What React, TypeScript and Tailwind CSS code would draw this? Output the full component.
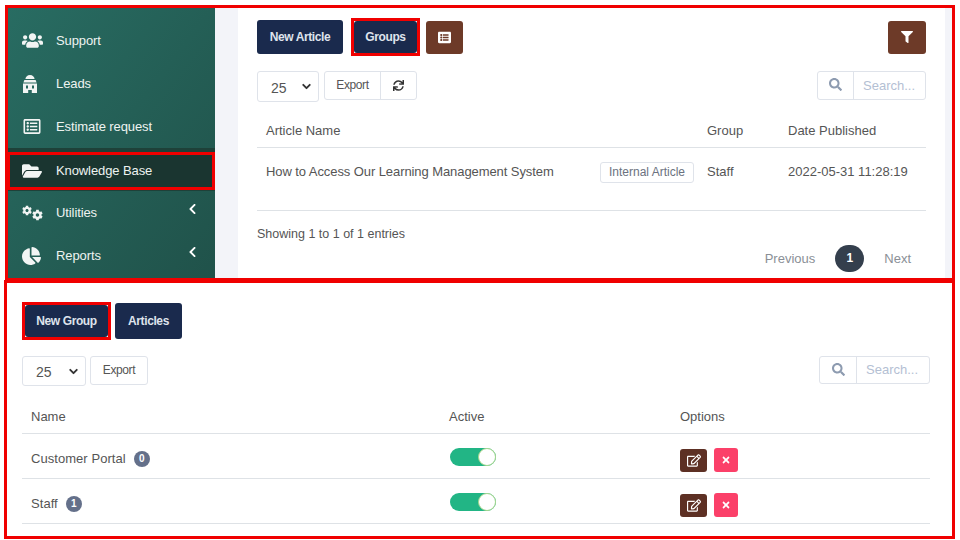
import type { ReactNode } from 'react'
import { ChevronDown } from 'lucide-react'
import {
  FaChartPie,
  FaChevronLeft,
  FaCog,
  FaFilter,
  FaFolderOpen,
  FaListAlt,
  FaRegEdit,
  FaRegListAlt,
  FaSearch,
  FaSync,
  FaTimes,
  FaUsers,
} from 'react-icons/fa'

const fontStack = "font-['Liberation_Sans',Arial,sans-serif]"

function LeadsIcon() {
  return (
    <svg viewBox="0 0 16 18" className="h-[18px] w-[16px]" fill="currentColor">
      <path d="M8 0c2.6 0 4.4 1.8 4.6 4H3.4C3.6 1.8 5.4 0 8 0z" />
      <path d="M2.4 5h11.2l1 2.4H1.4z" />
      <path fillRule="evenodd" d="M1 8.6h14V18H9.8v-3H6.2v3H1zM4 10.4v3h2v-3zM10 10.4v3h2v-3z" />
    </svg>
  )
}

function CogsIcon() {
  return (
    <div className="flex h-[16px] w-[21px] items-start justify-between">
      <FaCog className="h-[11px] w-[11px]" />
      <FaCog className="mt-[4px] h-[12px] w-[12px]" />
    </div>
  )
}

function SideItem({ icon, label, chevron }: { icon: ReactNode; label: string; chevron?: boolean }) {
  return (
    <div className="flex h-[43px] items-center pl-[14px] pr-[18px] text-white">
      <span className="flex w-[34px] justify-start text-[#f2f5f4]">{icon}</span>
      <span className="flex-1 pt-[1px] text-[13px] tracking-[-0.1px] text-[#eef3f1]">{label}</span>
      {chevron && <FaChevronLeft className="mb-[7px] h-[12px] w-[9px]" />}
    </div>
  )
}

function Sidebar() {
  return (
    <aside className="flex h-full w-[207px] shrink-0 flex-col bg-gradient-to-br from-[#286c62] to-[#20524a] pt-[11px]">
      <SideItem icon={<FaUsers className="h-[17px] w-[21px]" />} label="Support" />
      <SideItem icon={<LeadsIcon />} label="Leads" />
      <SideItem icon={<FaRegListAlt className="h-[17px] w-[20px]" />} label="Estimate request" />
      <div className="flex h-[43px] flex-col bg-[#1e4139] pt-[4px]">
        <div className="-ml-px flex h-[38px] w-[208px] items-center border-[3px] border-[#f00000] bg-[#1a3530] pl-[12px] text-white">
          <FaFolderOpen className="h-[18px] w-[20px] text-[#f2f5f4]" />
          <span className="ml-[14px] text-[13px] tracking-[-0.1px] text-[#eef3f1]">Knowledge Base</span>
        </div>
      </div>
      <SideItem icon={<CogsIcon />} label="Utilities" chevron />
      <SideItem icon={<FaChartPie className="h-[18px] w-[19px]" />} label="Reports" chevron />
    </aside>
  )
}

function NavyButton({ label, className }: { label: string; className: string }) {
  return (
    <div className={`flex items-center justify-center rounded-[3px] bg-[#1a2a4d] pb-[1px] text-[12px] font-bold tracking-[-0.4px] text-[#dfe3ec] ${className}`}>
      {label}
    </div>
  )
}

function PageSelect({ className }: { className: string }) {
  return (
    <div className={`flex items-center justify-between rounded-[3px] border border-[#dfe3ea] pl-[13px] pr-[5px] text-[14px] text-[#555] ${className}`}>
      <span className="pt-[3px]">25</span>
      <ChevronDown className="h-[13px] w-[13px] text-[#333]" strokeWidth={3.5} />
    </div>
  )
}

function SearchBox({ className, iconWidth }: { className: string; iconWidth: string }) {
  return (
    <div className={`flex items-stretch rounded-[3px] border border-[#dfe3ea] ${className}`}>
      <div className={`flex items-center justify-center border-r border-[#dfe3ea] ${iconWidth}`}>
        <FaSearch className="mb-[2px] h-[13px] w-[13px] text-[#8d9bb0]" />
      </div>
      <div className="flex flex-1 items-center pl-[9px] text-[13px] text-[#b4c0d3]">Search...</div>
    </div>
  )
}

function ArticlesPanel() {
  return (
    <main className="flex h-full w-[707px] shrink-0 flex-col bg-white px-[19px] pt-[10px] text-[#555]">
      <div className="flex h-[38px] items-center">
        <NavyButton label="New Article" className="h-[34px] w-[86px]" />
        <div className="ml-[8px] h-[38px] w-[69px] border-[3px] border-[#f00000]">
          <NavyButton label="Groups" className="h-full w-full" />
        </div>
        <div className="ml-[6px] flex h-[33px] w-[37px] items-center justify-center rounded-[3px] bg-[#6d3a28] text-white">
          <FaListAlt className="h-[13px] w-[13px]" />
        </div>
        <div className="ml-auto flex h-[33px] w-[38px] items-center justify-center rounded-[3px] bg-[#6d3a28] text-white">
          <FaFilter className="h-[12px] w-[12px]" />
        </div>
      </div>
      <div className="mt-[15px] flex h-[31px] items-start">
        <PageSelect className="h-[31px] w-[62px]" />
        <div className="ml-[5px] flex h-[29px] w-[93px] rounded-[3px] border border-[#dfe3ea] text-[#555]">
          <div className="flex w-[56px] items-center justify-center border-r border-[#dfe3ea] pb-[1px] text-[12px] tracking-[-0.4px]">Export</div>
          <div className="flex flex-1 items-center justify-center">
            <FaSync className="h-[11px] w-[11px] text-[#333]" />
          </div>
        </div>
        <SearchBox className="ml-auto h-[29px] w-[109px]" iconWidth="w-[36px]" />
      </div>
      <div className="grid h-[46px] grid-cols-[441px_81px_1fr] items-end border-b border-[#dee2e6] pb-[7px] text-[13px]">
        <span className="pl-[9px]">Article Name</span>
        <span className="pl-[9px]">Group</span>
        <span className="pl-[9px]">Date Published</span>
      </div>
      <div className="grid h-[48px] grid-cols-[441px_81px_1fr] items-center text-[13px]">
        <div className="flex items-center pl-[9px]">
          <span className="flex-1 tracking-[-0.08px]">How to Access Our Learning Management System</span>
          <span className="mr-[4px] flex h-[21px] w-[94px] items-center justify-center rounded-[3px] border border-[#dfe3ea] text-[12px] text-[#6b7280]">Internal Article</span>
        </div>
        <span className="pl-[9px]">Staff</span>
        <span className="pl-[9px]">2022-05-31 11:28:19</span>
      </div>
      <div className="mt-[14px] border-t border-[#dee2e6] pt-[14px] text-[12.5px] text-[#555]">Showing 1 to 1 of 1 entries</div>
      <div className="mt-[1px] flex items-center justify-end pr-[15px] text-[13px] text-[#8a8f96]">
        <span>Previous</span>
        <span className="ml-[20px] flex h-[27px] w-[29px] items-center justify-center rounded-full bg-[#343f4d] text-[12px] font-bold text-white">1</span>
        <span className="ml-[20px]">Next</span>
      </div>
    </main>
  )
}

function Toggle() {
  return (
    <div className="flex h-[18px] w-[46px] justify-end rounded-full bg-[#22b585]">
      <div className="h-[18px] w-[18px] rounded-full border border-[#a6d68c] bg-white" />
    </div>
  )
}

function GroupRow({ name, count }: { name: string; count: number }) {
  return (
    <div className="grid h-[45px] grid-cols-[418px_240px_1fr] items-center border-b border-[#dee2e6] text-[13px]">
      <div className="flex items-center pl-[9px] pt-[5px]">
        <span className="tracking-[0.05px]">{name}</span>
        <span className="ml-[8px] flex h-[16px] w-[16px] items-center justify-center rounded-full bg-[#64708a] text-[10px] font-bold text-white">{count}</span>
      </div>
      <div className="pl-[10px] pt-[2px]">
        <Toggle />
      </div>
      <div className="flex items-center pt-[8px]">
        <div className="flex h-[23px] w-[27px] items-center justify-center rounded-[3px] bg-[#5d3024] text-white">
          <FaRegEdit className="h-[13px] w-[14px]" />
        </div>
        <div className="ml-[7px] flex h-[24px] w-[24px] items-center justify-center rounded-[3px] bg-[#fb4069] text-white">
          <FaTimes className="h-[10px] w-[10px]" />
        </div>
      </div>
    </div>
  )
}

function GroupsPanel() {
  return (
    <section className="ml-[4px] mt-[-1px] h-[259px] w-[951px] border-[3px] border-[#f00000] bg-white pl-[15px] pr-[22px] pt-[19px] text-[#555]">
      <div className="flex h-[38px] items-center">
        <div className="h-[38px] w-[89px] border-[3px] border-[#f00000]">
          <NavyButton label="New Group" className="h-full w-full" />
        </div>
        <NavyButton label="Articles" className="ml-[4px] h-[36px] w-[67px]" />
      </div>
      <div className="mt-[16px] flex h-[30px] items-start">
        <PageSelect className="h-[30px] w-[64px]" />
        <div className="ml-[4px] flex h-[29px] w-[58px] items-center justify-center rounded-[3px] border border-[#dfe3ea] pb-[1px] text-[12px] tracking-[-0.4px]">Export</div>
        <SearchBox className="ml-auto h-[28px] w-[111px]" iconWidth="w-[37px]" />
      </div>
      <div className="grid h-[48px] grid-cols-[418px_240px_1fr] items-end border-b border-[#dee2e6] pb-[7px] text-[13px]">
        <span className="pl-[9px]">Name</span>
        <span className="pl-[9px]">Active</span>
        <span>Options</span>
      </div>
      <GroupRow name="Customer Portal" count={0} />
      <GroupRow name="Staff" count={1} />
    </section>
  )
}

export default function App() {
  return (
    <div className={`h-[540px] w-[960px] overflow-hidden bg-white pt-[5px] ${fontStack}`}>
      <div className="ml-[5px] h-[276px] w-[950px] border-[3px] border-[#f00000] bg-[#f3f4f9]">
        <div className="flex h-full">
          <Sidebar />
          <div className="w-[23px] shrink-0" />
          <ArticlesPanel />
        </div>
      </div>
      <GroupsPanel />
    </div>
  )
}
